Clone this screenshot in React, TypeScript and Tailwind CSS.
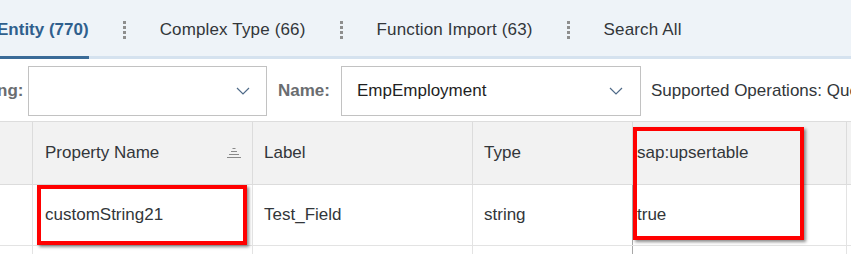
import React from "react";

const font = { fontFamily: '"Liberation Sans", Arial, sans-serif' };

function Dots() {
  return (
    <div className="flex flex-col gap-[2px] w-[3px] mx-[34px] shrink-0">
      <div className="w-[3px] h-[3px] bg-[#8e8e8e]" />
      <div className="w-[3px] h-[3px] bg-[#8e8e8e]" />
      <div className="w-[3px] h-[3px] bg-[#8e8e8e]" />
      <div className="w-[3px] h-[3px] bg-[#8e8e8e]" />
    </div>
  );
}

function Chevron() {
  return (
    <svg width="14" height="8" viewBox="0 0 14 8" className="shrink-0">
      <path d="M1 1 L7 7 L13 1" fill="none" stroke="#4f6a88" strokeWidth="1.2" />
    </svg>
  );
}

function SortIcon() {
  return (
    <svg width="14" height="10" viewBox="0 0 14 10" className="shrink-0">
      <rect x="5.5" y="0" width="3" height="1" fill="#8a8a8a" />
      <rect x="4" y="3" width="6" height="1" fill="#8a8a8a" />
      <rect x="2" y="6" width="10" height="1" fill="#8a8a8a" />
      <rect x="0" y="9" width="14" height="1" fill="#8a8a8a" />
    </svg>
  );
}

export default function App() {
  return (
    <div
      className="relative w-[851px] h-[254px] overflow-hidden bg-white text-[17px] text-[#32363a]"
      style={font}
    >
      {/* Tab bar */}
      <div className="flex flex-col bg-[#eef3f8]">
        <div className="flex items-center h-[56px] pt-[3px] whitespace-nowrap tracking-[0.15px]">
          <span className="ml-[-3px] shrink-0 font-bold tracking-normal text-[#2f5f8d]">Entity (770)</span>
          <Dots />
          <span className="shrink-0">Complex Type (66)</span>
          <Dots />
          <span className="shrink-0">Function Import (63)</span>
          <Dots />
          <span className="shrink-0">Search All</span>
        </div>
        <div className="flex h-[3px]">
          <div className="w-[89px] bg-[#3a6b98]" />
          <div className="flex-1 bg-[#d5e2ef]" />
        </div>
      </div>

      {/* Filter row */}
      <div className="flex items-center mt-[7px] h-[50px] whitespace-nowrap">
        <span className="ml-[-3px] w-[31px] shrink-0 font-bold text-[#6a6d70]">ng:</span>
        <div className="flex items-center justify-end w-[239px] shrink-0 h-[50px] border border-[#c2c2c2] pr-[16px]">
          <Chevron />
        </div>
        <span className="ml-[11px] shrink-0 font-bold text-[#6a6d70]">Name:</span>
        <div className="flex items-center justify-between ml-[11px] w-[300px] shrink-0 h-[50px] border border-[#c2c2c2] pl-[15px] pr-[17px]">
          <span className="text-[#1f1f1f]">EmpEmployment</span>
          <Chevron />
        </div>
        <span className="ml-[10px] shrink-0">Supported Operations: Query</span>
      </div>

      {/* Table */}
      <div className="mt-[5px] border-t border-[#dddddd] whitespace-nowrap">
        <div className="flex h-[63px] bg-[#f2f2f2] border-b border-[#dcdcdc]">
          <div className="w-[33px] shrink-0 border-r border-[#dcdcdc]" />
          <div className="flex items-center justify-between w-[220px] shrink-0 border-r border-[#dcdcdc] pl-[12px] pr-[11px]">
            <span>Property Name</span>
            <SortIcon />
          </div>
          <div className="flex items-center w-[220px] shrink-0 border-r border-[#dcdcdc] pl-[11px]">Label</div>
          <div className="flex items-center w-[160px] shrink-0 border-r border-[#dcdcdc] pl-[11px]">Type</div>
          <div className="flex items-center w-[214px] shrink-0 border-r border-[#dcdcdc] pl-[4px]">sap:upsertable</div>
          <div className="flex-1" />
        </div>
        <div className="flex h-[61px] border-b border-[#e3e3e3]">
          <div className="w-[33px] shrink-0 border-r border-[#e3e3e3]" />
          <div className="flex items-center w-[220px] shrink-0 border-r border-[#e3e3e3] pl-[12px]">customString21</div>
          <div className="flex items-center w-[220px] shrink-0 border-r border-[#e3e3e3] pl-[11px]">Test_Field</div>
          <div className="flex items-center w-[160px] shrink-0 border-r border-[#a8a8a8] pl-[11px]">string</div>
          <div className="flex items-center w-[214px] shrink-0 border-r border-[#e3e3e3] pl-[4px]">true</div>
          <div className="flex-1" />
        </div>
        <div className="flex h-[20px]">
          <div className="w-[33px] shrink-0 border-r border-[#e3e3e3]" />
          <div className="w-[220px] shrink-0 border-r border-[#e3e3e3]" />
          <div className="w-[220px] shrink-0 border-r border-[#e3e3e3]" />
          <div className="w-[160px] shrink-0 border-r border-[#a8a8a8]" />
          <div className="w-[214px] shrink-0 border-r border-[#e3e3e3]" />
        </div>
      </div>

      {/* Red annotation boxes */}
      <div className="absolute left-[37px] top-[185px] w-[210px] h-[60px] border-[4px] border-[#ff0000] shadow-[2px_2px_3px_rgba(0,0,0,0.45)]" />
      <div className="absolute left-[633px] top-[127px] w-[171px] h-[113px] border-[4px] border-[#ff0000] shadow-[2px_2px_3px_rgba(0,0,0,0.45)]" />
    </div>
  );
}
